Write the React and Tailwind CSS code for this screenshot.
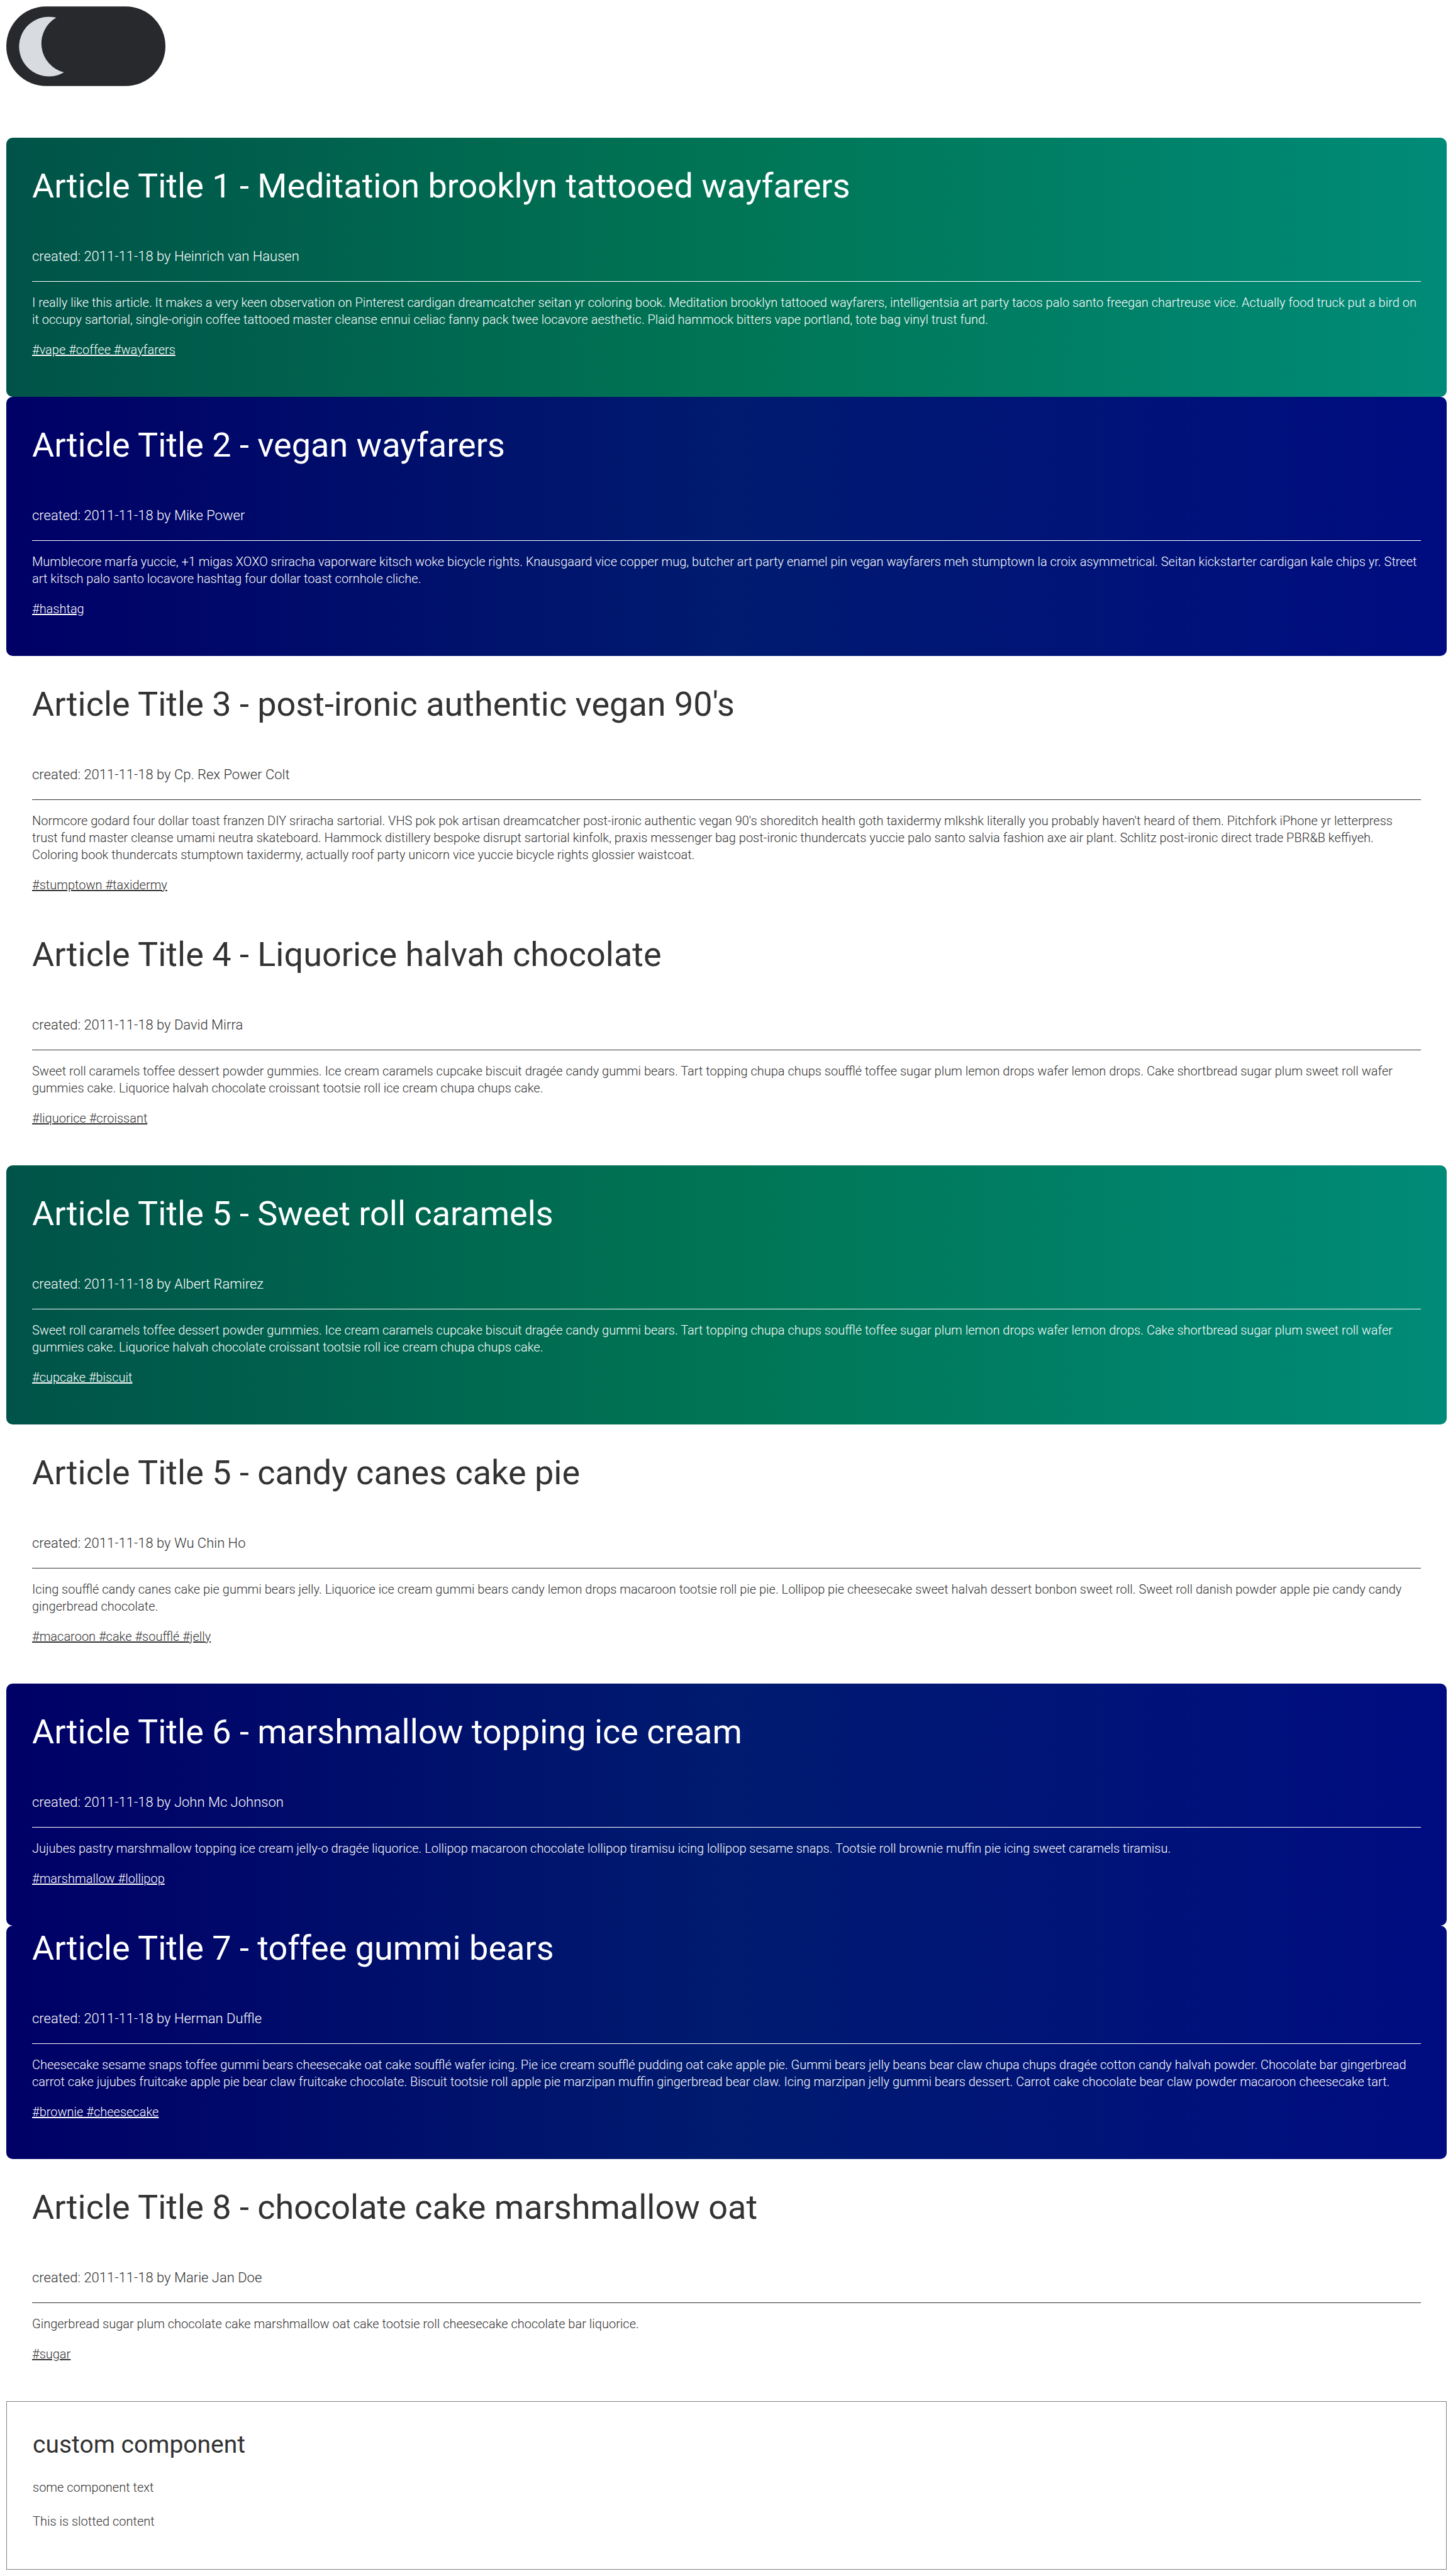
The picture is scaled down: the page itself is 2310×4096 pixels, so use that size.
import { useState } from "react";

const THEMES = {
  green: "rounded-[10px] bg-[linear-gradient(to_right,#005348,#007555,#008b78)] text-white",
  blue: "rounded-[10px] bg-[linear-gradient(to_right,#000066,#001b70,#000c80)] text-white",
  plain: "text-[#333333]",
};

const ARTICLES = [
  {
    theme: "green",
    title: "Article Title 1 - Meditation brooklyn tattooed wayfarers",
    author: "Heinrich van Hausen",
    text: "I really like this article. It makes a very keen observation on Pinterest cardigan dreamcatcher seitan yr coloring book. Meditation brooklyn tattooed wayfarers, intelligentsia art party tacos palo santo freegan chartreuse vice. Actually food truck put a bird on it occupy sartorial, single-origin coffee tattooed master cleanse ennui celiac fanny pack twee locavore aesthetic. Plaid hammock bitters vape portland, tote bag vinyl trust fund.",
    tags: "#vape #coffee #wayfarers",
  },
  {
    theme: "blue",
    title: "Article Title 2 - vegan wayfarers",
    author: "Mike Power",
    text: "Mumblecore marfa yuccie, +1 migas XOXO sriracha vaporware kitsch woke bicycle rights. Knausgaard vice copper mug, butcher art party enamel pin vegan wayfarers meh stumptown la croix asymmetrical. Seitan kickstarter cardigan kale chips yr. Street art kitsch palo santo locavore hashtag four dollar toast cornhole cliche.",
    tags: "#hashtag",
  },
  {
    theme: "plain",
    title: "Article Title 3 - post-ironic authentic vegan 90's",
    author: "Cp. Rex Power Colt",
    text: "Normcore godard four dollar toast franzen DIY sriracha sartorial. VHS pok pok artisan dreamcatcher post-ironic authentic vegan 90's shoreditch health goth taxidermy mlkshk literally you probably haven't heard of them. Pitchfork iPhone yr letterpress trust fund master cleanse umami neutra skateboard. Hammock distillery bespoke disrupt sartorial kinfolk, praxis messenger bag post-ironic thundercats yuccie palo santo salvia fashion axe air plant. Schlitz post-ironic direct trade PBR&B keffiyeh. Coloring book thundercats stumptown taxidermy, actually roof party unicorn vice yuccie bicycle rights glossier waistcoat.",
    tags: "#stumptown #taxidermy",
  },
  {
    theme: "plain",
    compact: true,
    title: "Article Title 4 - Liquorice halvah chocolate",
    author: "David Mirra",
    text: "Sweet roll caramels toffee dessert powder gummies. Ice cream caramels cupcake biscuit dragée candy gummi bears. Tart topping chupa chups soufflé toffee sugar plum lemon drops wafer lemon drops. Cake shortbread sugar plum sweet roll wafer gummies cake. Liquorice halvah chocolate croissant tootsie roll ice cream chupa chups cake.",
    tags: "#liquorice #croissant",
  },
  {
    theme: "green",
    title: "Article Title 5 - Sweet roll caramels",
    author: "Albert Ramirez",
    text: "Sweet roll caramels toffee dessert powder gummies. Ice cream caramels cupcake biscuit dragée candy gummi bears. Tart topping chupa chups soufflé toffee sugar plum lemon drops wafer lemon drops. Cake shortbread sugar plum sweet roll wafer gummies cake. Liquorice halvah chocolate croissant tootsie roll ice cream chupa chups cake.",
    tags: "#cupcake #biscuit",
  },
  {
    theme: "plain",
    title: "Article Title 5 - candy canes cake pie",
    author: "Wu Chin Ho",
    text: "Icing soufflé candy canes cake pie gummi bears jelly. Liquorice ice cream gummi bears candy lemon drops macaroon tootsie roll pie pie. Lollipop pie cheesecake sweet halvah dessert bonbon sweet roll. Sweet roll danish powder apple pie candy candy gingerbread chocolate.",
    tags: "#macaroon #cake #soufflé #jelly",
  },
  {
    theme: "blue",
    title: "Article Title 6 - marshmallow topping ice cream",
    author: "John Mc Johnson",
    text: "Jujubes pastry marshmallow topping ice cream jelly-o dragée liquorice. Lollipop macaroon chocolate lollipop tiramisu icing lollipop sesame snaps. Tootsie roll brownie muffin pie icing sweet caramels tiramisu.",
    tags: "#marshmallow #lollipop",
  },
  {
    theme: "blue",
    compact: true,
    title: "Article Title 7 - toffee gummi bears",
    author: "Herman Duffle",
    text: "Cheesecake sesame snaps toffee gummi bears cheesecake oat cake soufflé wafer icing. Pie ice cream soufflé pudding oat cake apple pie. Gummi bears jelly beans bear claw chupa chups dragée cotton candy halvah powder. Chocolate bar gingerbread carrot cake jujubes fruitcake apple pie bear claw fruitcake chocolate. Biscuit tootsie roll apple pie marzipan muffin gingerbread bear claw. Icing marzipan jelly gummi bears dessert. Carrot cake chocolate bear claw powder macaroon cheesecake tart.",
    tags: "#brownie #cheesecake",
  },
  {
    theme: "plain",
    title: "Article Title 8 - chocolate cake marshmallow oat",
    author: "Marie Jan Doe",
    text: "Gingerbread sugar plum chocolate cake marshmallow oat cake tootsie roll cheesecake chocolate bar liquorice.",
    tags: "#sugar",
  },
];

function ThemeToggle() {
  const [light, setLight] = useState(false);
  return (
    <label className="block h-[127px] w-[253px] cursor-pointer">
      <input
        type="checkbox"
        aria-label="Toggle theme"
        className="sr-only"
        checked={light}
        onChange={(e) => setLight(e.target.checked)}
      />
      <svg viewBox="0 0 400 200" className="block h-full w-full" aria-hidden="true">
        <rect width="400" height="200" rx="100" fill={light ? "#d8dbe0" : "#28292c"} />
        {light ? (
          <circle cx="293" cy="101" r="75" fill="#28292c" />
        ) : (
          <path d="M125.5 28.2A75 75 0 1 0 145 165.7A75 75 0 0 1 125.5 28.2Z" fill="#d8dbe0" />
        )}
      </svg>
    </label>
  );
}

function Article({ theme, compact, title, author, text, tags }) {
  return (
    <article className={`${THEMES[theme]} px-[41px] pb-[61px] ${compact ? "" : "pt-[41px]"}`}>
      <h1 className="text-[54px] leading-[72px] font-normal">{title}</h1>
      <p className="mt-[62px] border-b border-current pb-[25px] text-[22px] leading-[28px]">
        created: 2011-11-18 by {author}
      </p>
      <p className="mt-5 text-[20px] leading-[27px]">{text}</p>
      <p className="mt-[21px] text-[20px] leading-[27px]">
        <a href="#tags" className="underline decoration-2 underline-offset-1">
          {tags}
        </a>
      </p>
    </article>
  );
}

export default function App() {
  return (
    <div className="bg-white p-[10px] font-['Roboto',sans-serif] font-light text-[#333333]">
      <header className="mb-[82px]">
        <ThemeToggle />
      </header>
      <main>
        {ARTICLES.map((article) => (
          <Article key={article.title} {...article} />
        ))}
        <section className="border border-[#808080] px-[41px] pt-[41px] pb-[62px]">
          <h2 className="text-[39px] leading-[54px] font-normal">custom component</h2>
          <p className="mt-[28px] text-[20px] leading-[27px]">some component text</p>
          <p className="mt-[27px] text-[20px] leading-[27px]">This is slotted content</p>
        </section>
      </main>
    </div>
  );
}
